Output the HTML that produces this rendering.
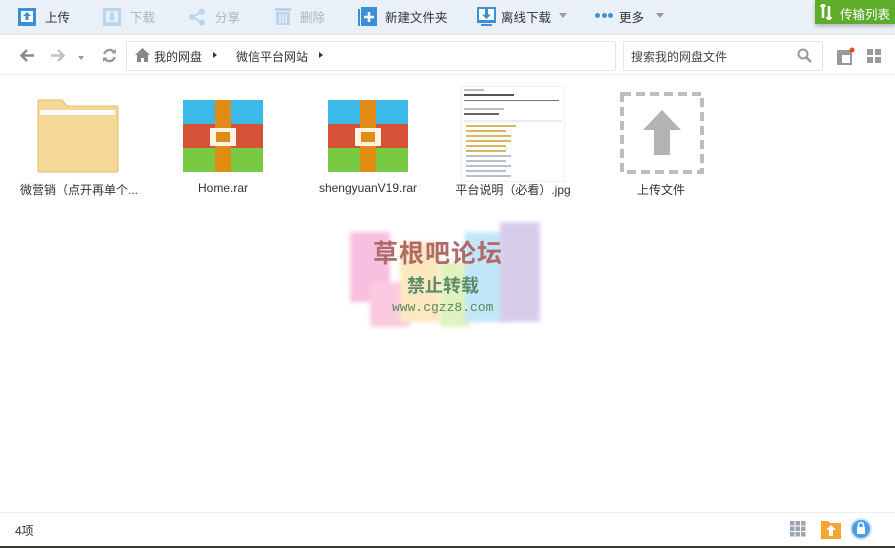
<!DOCTYPE html>
<html><head><meta charset="utf-8"><style>
*{margin:0;padding:0;box-sizing:border-box}
body{width:895px;height:548px;overflow:hidden;background:#fff;font-family:"Liberation Sans","Noto Sans CJK SC",sans-serif;font-size:12px;color:#333;position:relative}
.abs{position:absolute}
.tb{left:0;top:0;width:895px;height:35px;background:#eaf0f8;border-bottom:1px solid #dde3ea}
.t{position:absolute;top:7px;font-size:12.5px;color:#333}
.dis{color:#aab5c2}
.box{border:1px solid #e2e5e9;background:#fff;border-radius:2px}
.lbl{position:absolute;top:181px;font-size:12px;color:#333;text-align:center;width:140px}
</style></head><body>
<div class="abs tb"></div>
<svg class="abs" style="left:18px;top:8px" width="18" height="18"><rect width="18" height="18" fill="#3b8fd6"/><rect x="3" y="3" width="12" height="11" fill="#fff"/><path d="M9 4 L5 8 H7.5 V12 H10.5 V8 H13 Z" fill="#3b8fd6"/></svg>
<div class="t" style="left:45px">上传</div>
<svg class="abs" style="left:103px;top:8px" width="18" height="18"><rect width="18" height="18" fill="#b8d4ee"/><rect x="3" y="3" width="12" height="11" fill="#eaf0f8"/><path d="M9 13 L5 9 H7.5 V4 H10.5 V9 H13 Z" fill="#b8d4ee"/></svg>
<div class="t dis" style="left:130px">下载</div>
<svg class="abs" style="left:188px;top:8px" width="18" height="18"><circle cx="4" cy="9" r="3" fill="#b8d4ee"/><circle cx="14" cy="3.5" r="3" fill="#b8d4ee"/><circle cx="14" cy="14.5" r="3" fill="#b8d4ee"/><path d="M4 9 L14 3.5 M4 9 L14 14.5" stroke="#b8d4ee" stroke-width="2"/></svg>
<div class="t dis" style="left:215px">分享</div>
<svg class="abs" style="left:275px;top:7px" width="16" height="19"><rect x="0" y="1" width="16" height="3" fill="#b8d4ee"/><rect x="1" y="5" width="14" height="13" fill="#b8d4ee"/><path d="M5 7V16M8 7V16M11 7V16" stroke="#eaf0f8" stroke-width="1.5"/></svg>
<div class="t dis" style="left:300px">删除</div>
<svg class="abs" style="left:358px;top:7px" width="19" height="19"><rect x="0" y="2" width="2" height="17" fill="#3b8fd6"/><rect x="3" y="0" width="16" height="19" fill="#3b8fd6"/><path d="M11 5V15M6 10H16" stroke="#fff" stroke-width="2.5"/></svg>
<div class="t" style="left:385px">新建文件夹</div>
<svg class="abs" style="left:477px;top:7px" width="19" height="19"><rect x="0" y="0" width="19" height="16" fill="#3b8fd6"/><rect x="2" y="2" width="15" height="11" fill="#fff"/><path d="M9.5 12 L5 7.5 H8 V2 H11 V7.5 H14 Z" fill="#3b8fd6"/><rect x="4" y="17" width="11" height="2" fill="#3b8fd6"/></svg>
<div class="t" style="left:501px">离线下载</div>
<div class="abs" style="left:559px;top:13px;border:4px solid transparent;border-top:5px solid #999;border-bottom:0"></div>
<div class="abs" style="left:595px;top:13px;font-size:0"><span style="display:inline-block;width:5px;height:5px;border-radius:50%;background:#3b8fd6;margin-right:1.5px"></span><span style="display:inline-block;width:5px;height:5px;border-radius:50%;background:#3b8fd6;margin-right:1.5px"></span><span style="display:inline-block;width:5px;height:5px;border-radius:50%;background:#3b8fd6"></span></div>
<div class="t" style="left:619px">更多</div>
<div class="abs" style="left:656px;top:13px;border:4px solid transparent;border-top:5px solid #999;border-bottom:0"></div>
<div class="abs" style="left:815px;top:0;width:80px;height:24px;background:#5ead2a;box-shadow:0 2px 4px rgba(0,0,0,.25)"></div>
<svg class="abs" style="left:820px;top:4px" width="14" height="16"><path d="M3 0V14M1 3L3 0L5 3" stroke="#fff" stroke-width="2.5" fill="none"/><path d="M9 2V16M7 13L9 16L11 13" stroke="#fff" stroke-width="2.5" fill="none"/></svg>
<div class="abs" style="left:840px;top:4px;color:#fff;font-size:12.5px">传输列表</div>

<svg class="abs" style="left:20px;top:49px" width="14" height="13"><path d="M7 1L1.5 6.5L7 12M2 6.5H14" stroke="#8a8a8a" stroke-width="2.5" fill="none"/></svg>
<svg class="abs" style="left:51px;top:49px" width="14" height="13"><path d="M7 1L12.5 6.5L7 12M0 6.5H12" stroke="#c2c2c2" stroke-width="2.5" fill="none"/></svg>
<div class="abs" style="left:78px;top:56px;border:3.5px solid transparent;border-top:4px solid #999;border-bottom:0"></div>
<svg class="abs" style="left:102px;top:48px" width="15" height="15"><path d="M12.5 5A5.5 5.5 0 0 0 2.3 6M2.5 10A5.5 5.5 0 0 0 12.7 9" stroke="#999" stroke-width="2.4" fill="none"/><path d="M9.5 5.5H14V1Z M5.5 9.5H1V14Z" fill="#999"/></svg>
<div class="abs box" style="left:126px;top:41px;width:490px;height:30px"></div>
<svg class="abs" style="left:135px;top:48px" width="15" height="14"><path d="M7.5 0L0 7H2V14H6V10H9V14H13V7H15Z" fill="#888"/></svg>
<div class="abs" style="left:154px;top:48px">我的网盘</div>
<div class="abs" style="left:213px;top:52px;border:3px solid transparent;border-left:4px solid #333;border-right:0"></div>
<div class="abs" style="left:236px;top:48px">微信平台网站</div>
<div class="abs" style="left:319px;top:52px;border:3px solid transparent;border-left:4px solid #333;border-right:0"></div>
<div class="abs box" style="left:623px;top:41px;width:200px;height:30px"></div>
<div class="abs" style="left:631px;top:48px;color:#444">搜索我的网盘文件</div>
<svg class="abs" style="left:797px;top:48px" width="15" height="15"><circle cx="6" cy="6" r="4.5" stroke="#999" stroke-width="2" fill="none"/><path d="M9.5 9.5L14 14" stroke="#999" stroke-width="2.4"/></svg>
<svg class="abs" style="left:837px;top:47px" width="18" height="18"><rect x="1" y="4" width="13" height="13" fill="none" stroke="#999" stroke-width="2"/><rect x="1" y="4" width="13" height="4" fill="#999"/><rect x="1" y="4" width="4" height="13" fill="#999"/><circle cx="15" cy="3" r="2.5" fill="#f04a1c"/></svg>
<svg class="abs" style="left:867px;top:49px" width="14" height="14"><rect width="6" height="6" fill="#999"/><rect x="8" width="6" height="6" fill="#999"/><rect y="8" width="6" height="6" fill="#999"/><rect x="8" y="8" width="6" height="6" fill="#999"/></svg>
<div class="abs" style="left:0;top:74px;width:895px;height:1px;background:#eceef1"></div>

<svg class="abs" style="left:37px;top:99px" width="82" height="75"><path d="M1 3Q1 1 3 1H25L30 7H79Q81 7 81 9V71Q81 73 79 73H3Q1 73 1 71Z" fill="#f5d896" stroke="#e2bd6c"/><rect x="3" y="11" width="75" height="5" fill="#fff"/></svg>
<div class="lbl" style="left:9px">微营销（点开再单个...</div>
<svg class="abs" style="left:183px;top:100px" width="80" height="72"><rect width="80" height="24" fill="#3bb9e8"/><rect y="24" width="80" height="24" fill="#d55236"/><rect y="48" width="80" height="24" fill="#7ac943"/><rect x="32" width="16" height="72" fill="#e08b13"/><rect x="27" y="28" width="26" height="18" fill="#fdf3e4"/><rect x="33" y="32" width="14" height="10" fill="#e08b13"/></svg>
<div class="lbl" style="left:153px">Home.rar</div>
<svg class="abs" style="left:328px;top:100px" width="80" height="72"><rect width="80" height="24" fill="#3bb9e8"/><rect y="24" width="80" height="24" fill="#d55236"/><rect y="48" width="80" height="24" fill="#7ac943"/><rect x="32" width="16" height="72" fill="#e08b13"/><rect x="27" y="28" width="26" height="18" fill="#fdf3e4"/><rect x="33" y="32" width="14" height="10" fill="#e08b13"/></svg>
<div class="lbl" style="left:298px">shengyuanV19.rar</div>
<svg class="abs" style="left:461px;top:86px" width="104" height="96"><rect width="104" height="96" fill="#fff" stroke="#e6e6e6"/><g fill="#b9bfc8"><rect x="3" y="3" width="20" height="2"/><rect x="3" y="8" width="50" height="2" fill="#555"/><rect x="3" y="14" width="95" height="1" fill="#777"/><rect x="3" y="22" width="40" height="2"/><rect x="3" y="27" width="35" height="2" fill="#666"/><rect x="3" y="34" width="98" height="2" fill="#e8edf5"/><rect x="5" y="39" width="50" height="2" fill="#d8b760"/><rect x="5" y="44" width="40" height="2" fill="#d8b760"/><rect x="5" y="49" width="45" height="2" fill="#d8b760"/><rect x="5" y="54" width="45" height="2" fill="#d8b760"/><rect x="5" y="59" width="40" height="2" fill="#d8b760"/><rect x="5" y="64" width="40" height="2" fill="#d8b760"/><rect x="5" y="69" width="45" height="2"/><rect x="5" y="74" width="40" height="2"/><rect x="5" y="79" width="45" height="2"/><rect x="5" y="84" width="40" height="2"/><rect x="5" y="89" width="45" height="2"/></g></svg>
<div class="lbl" style="left:443px">平台说明（必看）.jpg</div>
<svg class="abs" style="left:620px;top:92px" width="85" height="83"><rect x="2" y="2" width="80" height="78" fill="none" stroke="#bdbdbd" stroke-width="4" stroke-dasharray="9 5"/><path d="M42 18L23 38H34V63H50V38H61Z" fill="#b3b3b3"/></svg>
<div class="lbl" style="left:591px">上传文件</div>

<div class="abs" style="left:350px;top:222px;width:190px;height:110px;opacity:.55">
<div class="abs" style="left:0;top:10px;width:40px;height:70px;background:#f28bc8;filter:blur(2px)"></div>
<div class="abs" style="left:20px;top:60px;width:40px;height:45px;background:#f5a0c8;filter:blur(2px)"></div>
<div class="abs" style="left:50px;top:20px;width:40px;height:80px;background:#fbd48a;filter:blur(2px)"></div>
<div class="abs" style="left:90px;top:40px;width:30px;height:65px;background:#c8e88a;filter:blur(2px)"></div>
<div class="abs" style="left:115px;top:10px;width:40px;height:90px;background:#8fd3f2;filter:blur(2px)"></div>
<div class="abs" style="left:150px;top:0;width:40px;height:100px;background:#b9a3dc;filter:blur(2px)"></div>
</div>
<div class="abs" style="left:373px;top:234px;font-size:25px;font-weight:bold;color:#b06a6a;letter-spacing:1px">草根吧论坛</div>
<div class="abs" style="left:407px;top:272px;font-size:18px;font-weight:bold;color:#5c8a6a">禁止转载</div>
<div class="abs" style="left:392px;top:300px;font-size:13px;color:#5a8a5a;font-family:'Liberation Mono',monospace">www.cgzz8.com</div>

<div class="abs" style="left:0;top:512px;width:895px;height:1px;background:#eceef1"></div>
<div class="abs" style="left:15px;top:522px;color:#333">4项</div>
<svg class="abs" style="left:790px;top:521px" width="16" height="16"><g fill="#9aa5b1"><rect width="4.5" height="4.5"/><rect x="5.5" width="4.5" height="4.5"/><rect x="11" width="4.5" height="4.5"/><rect y="5.5" width="4.5" height="4.5"/><rect x="5.5" y="5.5" width="4.5" height="4.5"/><rect x="11" y="5.5" width="4.5" height="4.5"/><rect y="11" width="4.5" height="4.5"/><rect x="5.5" y="11" width="4.5" height="4.5"/><rect x="11" y="11" width="4.5" height="4.5"/></g></svg>
<svg class="abs" style="left:821px;top:519px" width="20" height="20"><path d="M0 2H7L9 4H20V20H0Z" fill="#f3a630"/><path d="M10 6L5 11H8V17H12V11H15Z" fill="#fff"/></svg>
<svg class="abs" style="left:850px;top:518px" width="22" height="22"><circle cx="11" cy="11" r="10" fill="#4a9ee8" stroke="#cfe4f7" stroke-width="2"/><rect x="7" y="9" width="8" height="7" fill="#fff"/><path d="M8.5 9V7A2.5 2.5 0 0 1 13.5 7V9" stroke="#fff" stroke-width="1.6" fill="none"/></svg>
<div class="abs" style="left:0;top:546px;width:895px;height:2px;background:#3a3a30"></div>
</body></html>
